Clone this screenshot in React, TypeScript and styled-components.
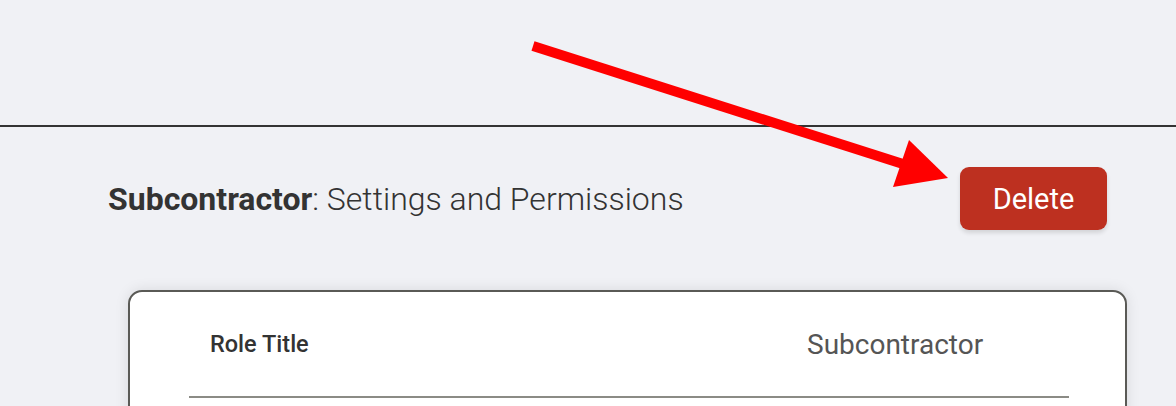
import React from 'react';
import styled, { createGlobalStyle } from 'styled-components';

const GlobalStyle = createGlobalStyle`
  html, body {
    margin: 0;
    padding: 0;
    background: #f0f1f5;
    font-family: Roboto, "Liberation Sans", Arial, sans-serif;
  }
  #root {
    min-height: 406px;
  }
`;

const Page = styled.div`
  position: relative;
  width: 1176px;
  height: 406px;
  overflow: hidden;
  background: #f0f1f5;
`;

const TopBar = styled.div`
  height: 125px;
  border-bottom: 2px solid #333333;
`;

const Content = styled.div`
  padding: 40px 49px 0 108px;
`;

const HeaderRow = styled.div`
  display: flex;
  align-items: center;
  justify-content: space-between;
  padding-right: 20px;
`;

const PageTitle = styled.h1`
  margin: 0;
  font-size: 32px;
  font-weight: 300;
  color: #333333;
  letter-spacing: 0;

  strong {
    font-weight: 700;
  }
`;

const DeleteButton = styled.button`
  width: 147px;
  height: 63px;
  border: none;
  border-radius: 9px;
  background: #bd3020;
  color: #ffffff;
  font-family: Roboto, "Liberation Sans", Arial, sans-serif;
  font-size: 29px;
  font-weight: 400;
  box-shadow: 0 3px 4px rgba(0, 0, 0, 0.12);
  cursor: pointer;
`;

const Card = styled.section`
  margin: 60px 0 0 20px;
  background: #ffffff;
  border: 2px solid #5a5a56;
  border-radius: 14px;
  box-shadow: 0 0 14px rgba(0, 0, 0, 0.1);
  padding: 0 56px 0 59px;
  height: 200px;
`;

const FieldRow = styled.div`
  display: grid;
  grid-template-columns: 1fr 262px;
  align-items: center;
  height: 104px;
  border-bottom: 2px solid #8b8b85;
`;

const FieldLabel = styled.div`
  padding-left: 21px;
  font-size: 23.5px;
  font-weight: 500;
  color: #333333;
`;

const FieldValue = styled.div`
  font-size: 28px;
  font-weight: 400;
  color: #555555;
`;

const ArrowSvg = styled.svg`
  position: absolute;
  left: 0;
  top: 0;
  pointer-events: none;
`;

const Arrow: React.FC = () => (
  <ArrowSvg width="1176" height="406" viewBox="0 0 1176 406">
    <line x1="533" y1="46" x2="903" y2="164" stroke="#ff0000" strokeWidth="10" />
    <polygon points="909,140 948,178 893,187" fill="#ff0000" />
  </ArrowSvg>
);

const App: React.FC = () => {
  return (
    <>
      <GlobalStyle />
      <Page>
        <TopBar />
        <Content>
          <HeaderRow>
            <PageTitle>
              <strong>Subcontractor</strong>: Settings and Permissions
            </PageTitle>
            <DeleteButton>Delete</DeleteButton>
          </HeaderRow>
          <Card>
            <FieldRow>
              <FieldLabel>Role Title</FieldLabel>
              <FieldValue>Subcontractor</FieldValue>
            </FieldRow>
          </Card>
        </Content>
        <Arrow />
      </Page>
    </>
  );
};

export default App;
